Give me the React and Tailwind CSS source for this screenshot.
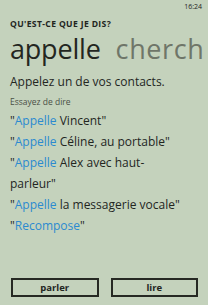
export default function App() {
  const examples = [
    { verb: "Appelle", rest: [" Vincent"] },
    { verb: "Appelle", rest: [" Céline, au portable"] },
    { verb: "Appelle", rest: [" Alex avec haut-", "parleur"] },
    { verb: "Appelle", rest: [" la messagerie vocale"] },
    { verb: "Recompose", rest: [""] },
  ];

  return (
    <div
      className="flex flex-col w-[208px] h-[305px] overflow-hidden bg-[#c4d2bc] text-[#23261f]"
      style={{ fontFamily: '"Open Sans", "Noto Sans", sans-serif' }}
    >
      {/* barre d'état */}
      <div className="flex justify-end pr-[6px] pt-[2px] h-[12px] text-[7px] leading-[10px]">16:24</div>

      <div className="pl-[10px]">
        <div className="mt-[7px] text-[8.6px] font-bold leading-[11px] tracking-[0.35px]">
          QU'EST-CE QUE JE DIS?
        </div>

        <div className="whitespace-nowrap text-[27px] leading-[37px] tracking-[-0.2px]">
          <span>appelle</span>
          <span className="ml-[15px] tracking-[0.6px] text-[#6f7669]">cherch</span>
        </div>

        <div className="mt-[7px] text-[12px] leading-[16px]">Appelez un de vos contacts.</div>

        <div className="mt-[6px] text-[8.5px] leading-[12px] text-[#4a5046]">Essayez de dire</div>

        <ul className="mt-[2px] pr-[6px] text-[12px] leading-[21px]">
          {examples.map((e, i) => (
            <li key={i} className="whitespace-nowrap">
              "<span className="text-[#2b8ad0]">{e.verb}</span>
              {e.rest.map((part, j) => (
                <span key={j}>
                  {j > 0 && <br />}
                  {part}
                </span>
              ))}
              "
            </li>
          ))}
        </ul>
      </div>

      <div className="mt-auto mb-[8px] ml-[11px] mr-[10px] flex gap-[12px]">
        <button className="flex-1 h-[19px] border-2 border-[#262923] text-[9.5px] font-bold leading-[15px]">
          parler
        </button>
        <button className="flex-1 h-[19px] border-2 border-[#262923] text-[9.5px] font-bold leading-[15px]">
          lire
        </button>
      </div>
    </div>
  );
}
